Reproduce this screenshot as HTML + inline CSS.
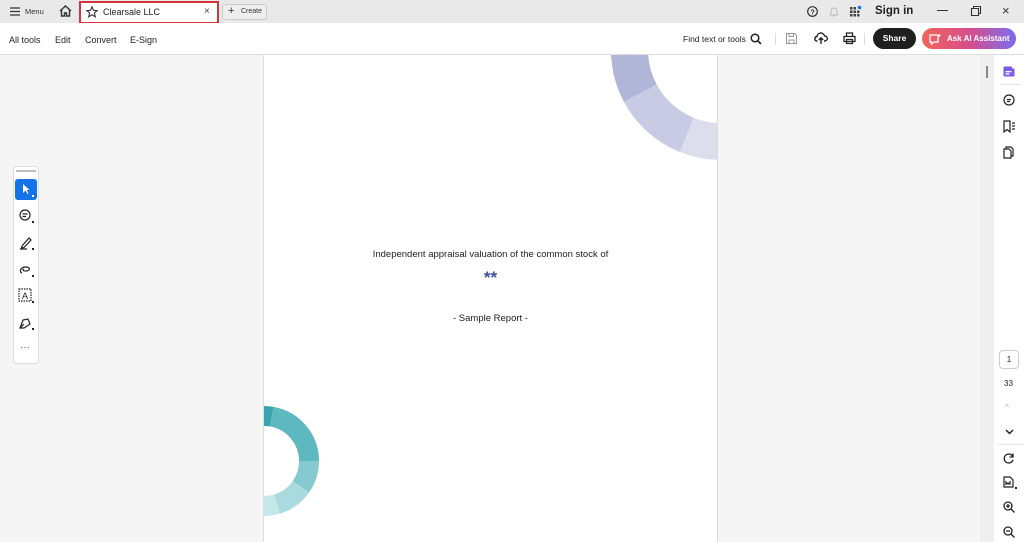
<!DOCTYPE html>
<html><head><meta charset="utf-8"><style>
*{margin:0;padding:0;box-sizing:border-box}
body{width:1024px;height:542px;overflow:hidden;background:#f5f5f5;font-family:"Liberation Sans",sans-serif;position:relative;color:#222}
.a{position:absolute}
.top{left:0;top:0;width:1024px;height:23px;background:#e9e9e9}
.tb{left:0;top:23px;width:1024px;height:32px;background:#fff;border-bottom:1px solid #ddd}
.t{font-size:9px;white-space:nowrap}
svg{overflow:visible}
</style></head><body>
<div class="a top"></div>
<svg class="a" style="left:10px;top:7px" width="10" height="9"><path d="M0 1H10M0 4.5H10M0 8H10" stroke="#333" stroke-width="1.3"/></svg>
<div class="a t" style="left:25px;top:7px;font-size:7.5px;color:#333">Menu</div>
<svg class="a" style="left:59px;top:5px" width="13" height="12"><path d="M1 6L6.5 1L12 6M2.5 5V11H5.5V8H7.5V11H10.5V5" fill="none" stroke="#333" stroke-width="1.4"/></svg>
<div class="a" style="left:79px;top:1px;width:140px;height:23px;background:#fff;border:2px solid #d4343b"></div>
<svg class="a" style="left:86px;top:6px" width="12" height="12"><path d="M6 0.8L7.5 4.3L11.2 4.6L8.4 7L9.3 10.8L6 8.8L2.7 10.8L3.6 7L0.8 4.6L4.5 4.3Z" fill="none" stroke="#333" stroke-width="1.1"/></svg>
<div class="a t" style="left:103px;top:7px;font-size:9px">Clearsale LLC</div>
<div class="a t" style="left:204px;top:6px;font-size:10px;color:#444">×</div>
<div class="a" style="left:222px;top:4px;width:45px;height:16px;border:1px solid #ccc;border-radius:3px;background:#eee"></div>
<div class="a t" style="left:228px;top:5px;font-size:11px;color:#333">+</div>
<div class="a t" style="left:241px;top:8px;font-size:7px;color:#333">Create</div>
<svg class="a" style="left:807px;top:6px" width="11" height="11"><circle cx="5.5" cy="5.5" r="4.8" fill="none" stroke="#333" stroke-width="1.2"/><text x="3.5" y="8.3" font-size="7" font-family="Liberation Sans" font-weight="bold" fill="#333">?</text></svg>
<svg class="a" style="left:829px;top:6px" width="10" height="11"><path d="M2 8V5A3 3 0 0 1 8 5V8L9 9H1ZM4 10H6" fill="none" stroke="#bbb" stroke-width="1"/></svg>
<svg class="a" style="left:850px;top:6px" width="12" height="12"><g fill="#444"><rect x="0" y="1" width="2.5" height="2.5"/><rect x="3.5" y="1" width="2.5" height="2.5"/><rect x="0" y="4.5" width="2.5" height="2.5"/><rect x="3.5" y="4.5" width="2.5" height="2.5"/><rect x="7" y="4.5" width="2.5" height="2.5"/><rect x="0" y="8" width="2.5" height="2.5"/><rect x="3.5" y="8" width="2.5" height="2.5"/><rect x="7" y="8" width="2.5" height="2.5"/></g><circle cx="9.5" cy="1.5" r="1.8" fill="#1473e6"/></svg>
<div class="a t" style="left:875px;top:5px;font-size:11.5px;font-weight:bold;color:#222">Sign in</div>
<div class="a" style="left:937px;top:10px;width:11px;height:1.3px;background:#333"></div>
<svg class="a" style="left:971px;top:6px" width="10" height="10"><path d="M0.5 2.5H7.5V9.5H0.5Z M2.5 2.5V0.5H9.5V7.5H7.5" fill="none" stroke="#333" stroke-width="1.1"/></svg>
<div class="a t" style="left:1002px;top:3px;font-size:13px;color:#333">×</div>
<div class="a tb"></div>
<div class="a t" style="left:9px;top:35px">All tools</div>
<div class="a t" style="left:55px;top:35px">Edit</div>
<div class="a t" style="left:85px;top:35px">Convert</div>
<div class="a t" style="left:130px;top:35px">E-Sign</div>
<div class="a t" style="left:683px;top:34px;font-size:8.5px">Find text or tools</div>
<svg class="a" style="left:750px;top:33px" width="12" height="12"><circle cx="5" cy="5" r="3.8" fill="none" stroke="#222" stroke-width="1.5"/><path d="M7.8 7.8L11 11" stroke="#222" stroke-width="1.6"/></svg>
<div class="a" style="left:775px;top:33px;width:1px;height:12px;background:#ddd"></div>
<svg class="a" style="left:786px;top:33px" width="11" height="11"><path d="M0.5 0.5H8.5L10.5 2.5V10.5H0.5Z M3 0.5V3.5H7.5V0.5 M3 10.5V7H8V10.5" fill="none" stroke="#999" stroke-width="1"/></svg>
<svg class="a" style="left:814px;top:32px" width="14" height="13"><path d="M3.5 9H2.5A2.3 2.3 0 0 1 3 4.5A3.8 3.8 0 0 1 10.5 4A2.5 2.5 0 0 1 11 9H10M7 12V6M4.8 8L7 5.8L9.2 8" fill="none" stroke="#222" stroke-width="1.4"/></svg>
<svg class="a" style="left:843px;top:32px" width="13" height="12"><path d="M3.5 4V1H9.5V4M1 4.5H12V9.5H1Z M3.5 7.5H9.5V11.5H3.5Z" fill="#fff" stroke="#222" stroke-width="1.3"/></svg>
<div class="a" style="left:864px;top:33px;width:1px;height:12px;background:#ddd"></div>
<div class="a" style="left:873px;top:28px;width:43px;height:21px;background:#1f1f1f;border-radius:11px;color:#fff;font-size:8.5px;font-weight:bold;text-align:center;line-height:21px">Share</div>
<div class="a" style="left:922px;top:28px;width:94px;height:21px;border-radius:11px;background:linear-gradient(90deg,#f1645a,#d84e8a 50%,#7a6cf0);color:#fff;font-size:8px;font-weight:bold;line-height:21px;padding-left:25px">Ask AI Assistant</div>
<svg class="a" style="left:929px;top:33px" width="13" height="12"><path d="M1 2H9V9H5L2.5 11V9H1Z" fill="none" stroke="#fff" stroke-width="1.3"/><path d="M10.5 0.5L11 2L12.5 2.5L11 3L10.5 4.5L10 3L8.5 2.5L10 2Z" fill="#fff"/></svg>
<div class="a" style="left:263px;top:55px;width:455px;height:487px;background:#fff;border-left:1px solid #ddd;border-right:1px solid #ddd;overflow:hidden">
<svg class="a" style="left:0;top:0" width="455" height="487">
<g fill="none" stroke-width="37">
<circle cx="457" cy="-5" r="91.5" pathLength="360" stroke="#b1b5d8" stroke-dasharray="50 310" stroke-dashoffset="-152"/>
<circle cx="457" cy="-5" r="91.5" pathLength="360" stroke="#c8cbe3" stroke-dasharray="40 320" stroke-dashoffset="-112"/>
<circle cx="457" cy="-5" r="91.5" pathLength="360" stroke="#dcdeee" stroke-dasharray="60 300" stroke-dashoffset="-52"/>
</g>
<g fill="none" stroke-width="20">
<circle cx="0" cy="406" r="45" pathLength="360" stroke="#3aa4ac" stroke-dasharray="20 340" stroke-dashoffset="-260"/>
<circle cx="0" cy="406" r="45" pathLength="360" stroke="#5db8c0" stroke-dasharray="80 280" stroke-dashoffset="-280"/>
<circle cx="0" cy="406" r="45" pathLength="360" stroke="#86cad0" stroke-dasharray="35 325" stroke-dashoffset="0"/>
<circle cx="0" cy="406" r="45" pathLength="360" stroke="#a8dade" stroke-dasharray="38 322" stroke-dashoffset="-35"/>
<circle cx="0" cy="406" r="45" pathLength="360" stroke="#c5e7ea" stroke-dasharray="30 330" stroke-dashoffset="-73"/>
</g>
</svg>
<div class="a t" style="left:0;width:453px;text-align:center;top:194px;font-size:9.5px;color:#222">Independent appraisal valuation of the common stock of</div>
<div class="a t" style="left:0;width:453px;text-align:center;top:213px;font-size:17px;color:#3b4d9a;font-weight:bold">**</div>
<div class="a t" style="left:0;width:453px;text-align:center;top:258px;font-size:9.5px;color:#222">- Sample Report -</div>
</div>
<div class="a" style="left:13px;top:166px;width:26px;height:198px;background:#fff;border:1px solid #ddd;border-radius:4px"></div>
<div class="a" style="left:16px;top:170px;width:20px;height:2px;background:#bbb"></div>
<div class="a" style="left:15px;top:179px;width:22px;height:21px;background:#1473e6;border-radius:3px"></div>
<svg class="a" style="left:15px;top:179px" width="22" height="21"><path d="M8 5V14L10.5 11.5L12.5 15L13.5 14.5L11.8 11H14.5Z" fill="#fff"/><path d="M17 16H19V18H17Z" fill="#fff"/></svg>
<svg class="a" style="left:18px;top:208px" width="18" height="16" fill="none" stroke="#222" stroke-width="1.2"><circle cx="7" cy="7" r="5"/><path d="M4.5 6H9.5M4.5 8.5H8"/><path d="M14 13H16V15H14Z" fill="#222" stroke="none"/></svg>
<svg class="a" style="left:18px;top:235px" width="18" height="16" fill="none" stroke="#222" stroke-width="1.2"><path d="M4 11L11 3L13 5L6 12.5L3.5 13Z M2 14H9"/><path d="M14 13H16V15H14Z" fill="#222" stroke="none"/></svg>
<svg class="a" style="left:18px;top:262px" width="18" height="16" fill="none" stroke="#222" stroke-width="1.2"><path d="M4 11C1 10 2 5 8 5C13 5 12 9 8 9C5 9 4 8 6 7"/><path d="M14 13H16V15H14Z" fill="#222" stroke="none"/></svg>
<svg class="a" style="left:18px;top:288px" width="18" height="16" fill="none" stroke="#222" stroke-width="1.2"><path d="M1 1H13V13H1Z" stroke-dasharray="1.5 1"/><text x="4" y="11" font-size="9" font-family="Liberation Sans" fill="#222" stroke="none">A</text><path d="M14 13H16V15H14Z" fill="#222" stroke="none"/></svg>
<svg class="a" style="left:18px;top:315px" width="18" height="16" fill="none" stroke="#222" stroke-width="1.2"><path d="M2 13L5 5L10 4L12 9L6 13Z M2 13L6 9"/><path d="M14 13H16V15H14Z" fill="#222" stroke="none"/></svg>
<div class="a t" style="left:20px;top:342px;font-size:10px;color:#555">···</div>
<div class="a" style="left:980px;top:55px;width:14px;height:487px;background:#efefef"></div>
<div class="a" style="left:994px;top:55px;width:30px;height:487px;background:#fff"></div>
<div class="a" style="left:986px;top:66px;width:2px;height:12px;background:#888"></div>
<svg class="a" style="left:1003px;top:65px" width="13" height="12"><rect x="0.5" y="1.5" width="11" height="10" rx="1" fill="#7b5ce0"/><rect x="2.5" y="6" width="6" height="1.3" fill="#fff"/><rect x="2.5" y="8.3" width="4" height="1.3" fill="#fff"/><circle cx="10.5" cy="2" r="1.6" fill="#fff"/></svg>
<div class="a" style="left:1000px;top:84px;width:20px;height:1px;background:#e5e5e5"></div>
<svg class="a" style="left:1003px;top:94px" width="12" height="12" fill="none" stroke="#222" stroke-width="1.2"><circle cx="6" cy="6" r="5"/><path d="M4 5.5H8M4 7.5H7"/></svg>
<svg class="a" style="left:1003px;top:120px" width="13" height="13" fill="none" stroke="#222" stroke-width="1.2"><path d="M1 1H7V12L4 9.5L1 12Z M9 3H12M9 6H12M9 9H12"/></svg>
<svg class="a" style="left:1003px;top:146px" width="12" height="13" fill="none" stroke="#222" stroke-width="1.2"><path d="M3 3V1H8L10 3V10H8 M1 3H6L8 5V12H1Z"/></svg>
<div class="a" style="left:999px;top:350px;width:20px;height:19px;border:1px solid #ccc;border-radius:4px;font-size:8px;text-align:center;line-height:17px">1</div>
<div class="a t" style="left:1004px;top:379px;font-size:8px">33</div>
<div class="a t" style="left:1005px;top:403px;font-size:8px;color:#aaa">^</div>
<svg class="a" style="left:1005px;top:429px" width="9" height="6"><path d="M1 1L4.5 4.5L8 1" fill="none" stroke="#222" stroke-width="1.5"/></svg>
<div class="a" style="left:997px;top:444px;width:27px;height:1px;background:#e5e5e5"></div>
<svg class="a" style="left:1003px;top:452px" width="12" height="12" fill="none" stroke="#222" stroke-width="1.3"><path d="M10 5A4.5 4.5 0 1 0 10 8M10 1.5V5H6.5"/></svg>
<svg class="a" style="left:1003px;top:476px" width="14" height="14" fill="none" stroke="#222" stroke-width="1.2"><path d="M1 1H7L10 4V11H1Z M3 9V6L5 8L7 6V9"/><path d="M12 11H14V13H12Z" fill="#222" stroke="none"/></svg>
<svg class="a" style="left:1003px;top:501px" width="12" height="12" fill="none" stroke="#222" stroke-width="1.3"><circle cx="5" cy="5" r="4"/><path d="M8 8L11.5 11.5M3 5H7M5 3V7"/></svg>
<svg class="a" style="left:1003px;top:526px" width="12" height="12" fill="none" stroke="#222" stroke-width="1.3"><circle cx="5" cy="5" r="4"/><path d="M8 8L11.5 11.5M3 5H7"/></svg>
</body></html>
